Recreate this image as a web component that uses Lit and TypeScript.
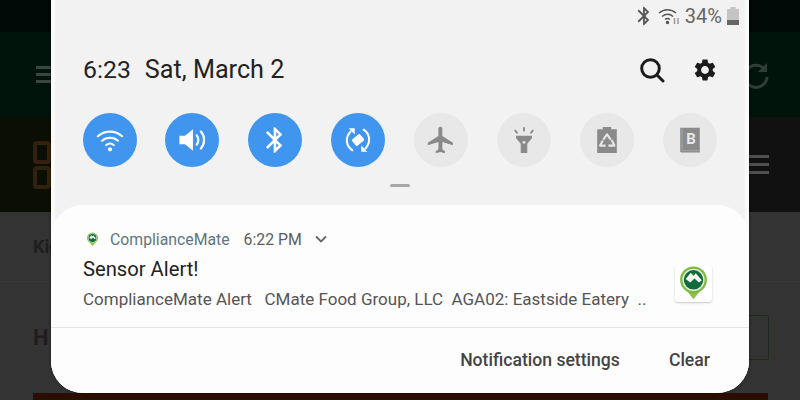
import { LitElement, css, html, svg } from "lit";
import { customElement } from "lit/decorators.js";

const BLUETOOTH =
  "M17.71 7.71L12 2h-1v7.59L6.41 5 5 6.41 10.59 12 5 17.59 6.41 19 11 14.41V22h1l5.71-5.71-4.3-4.29 4.3-4.29zM13 5.83l1.88 1.88L13 9.59V5.83zm1.88 10.46L13 18.17v-3.76l1.88 1.88z";
const FLIGHT =
  "M21 16v-2l-8-5V3.5c0-.83-.67-1.5-1.5-1.5S10 2.67 10 3.5V9l-8 5v2l8-2.5V19l-2 1.5V22l3.5-1 3.5 1v-1.5L13 19v-5.5l8 2.5z";
const GEAR =
  "M19.14 12.94c.04-.3.06-.61.06-.94 0-.32-.02-.64-.07-.94l2.03-1.58c.18-.14.23-.41.12-.61l-1.92-3.32c-.12-.22-.37-.29-.59-.22l-2.39.96c-.5-.38-1.03-.7-1.62-.94l-.36-2.54c-.04-.24-.24-.41-.48-.41h-3.84c-.24 0-.43.17-.47.41l-.36 2.54c-.59.24-1.13.57-1.62.94l-2.39-.96c-.22-.08-.47 0-.59.22L2.74 8.87c-.12.21-.08.47.12.61l2.03 1.58c-.05.3-.09.63-.09.94s.02.64.07.94l-2.03 1.58c-.18.14-.23.41-.12.61l1.92 3.32c.12.22.37.29.59.22l2.39-.96c.5.38 1.03.7 1.62.94l.36 2.54c.05.24.24.41.48.41h3.84c.24 0 .44-.17.47-.41l.36-2.54c.59-.24 1.13-.56 1.62-.94l2.39.96c.22.08.47 0 .59-.22l1.92-3.32c.12-.22.07-.47-.12-.61l-2.01-1.58zM12 15.6c-1.98 0-3.6-1.62-3.6-3.6s1.62-3.6 3.6-3.6 3.6 1.62 3.6 3.6-1.62 3.6-3.6 3.6z";

// quick settings glyphs, all drawn in a 30x30 box
const wifiGlyph = svg`
  <g fill="none" stroke="currentColor" stroke-width="2.200" stroke-linecap="round">
    <path d="M2 11c7.500-6.600 18.500-6.600 26 0" />
    <path d="M6.500 15.800c5-4.300 12-4.300 17 0" />
    <path d="M11 20.400c2.400-2 5.600-2 8 0" />
  </g>
  <circle cx="15" cy="25" r="2.200" fill="currentColor" />`;
const soundGlyph = svg`
  <path d="M1.500 10.500h6L16 3.500v23l-8.500-7h-6z" fill="currentColor" />
  <g fill="none" stroke="currentColor" stroke-width="2.300" stroke-linecap="round">
    <path d="M20 10c2.400 2.800 2.400 7.200 0 10" />
    <path d="M24.500 6c4.600 5 4.600 13 0 18" />
  </g>`;
const bluetoothGlyph = svg`
  <g transform="translate(-1.500 -1.500) scale(1.37)"><path d=${BLUETOOTH} fill="currentColor" /></g>`;
const rotateGlyph = svg`
  <g fill="none" stroke="currentColor" stroke-width="2.200" stroke-linecap="round">
    <path d="M9 26c-7-4.500-8-13.500-2-20" />
    <path d="M21 4c7 4.500 8 13.500 2 20" />
  </g>
  <path d="M5 2.500h6.500V9zM25 27.500h-6.500V21z" fill="currentColor" />
  <rect x="9.500" y="10.500" width="11" height="9" rx="1.500" fill="currentColor" transform="rotate(-40 15 15)" />`;
const flightGlyph = svg`
  <g transform="translate(-2 -2) scale(1.42)"><path d=${FLIGHT} fill="currentColor" /></g>`;
const torchGlyph = svg`
  <path d="M6.500 10.500h17v2.500L18.500 19v10h-7V19L6.500 13z" fill="currentColor" />
  <circle cx="15" cy="17.500" r="1.500" fill="#e8e8e8" />
  <rect x="14" y="1" width="2" height="5" rx="1" fill="currentColor" />
  <rect x="5.500" y="3.500" width="2" height="5" rx="1" fill="currentColor" transform="rotate(-40 6.500 6)" />
  <rect x="22.500" y="3.500" width="2" height="5" rx="1" fill="currentColor" transform="rotate(40 23.500 6)" />`;
const batterySaverGlyph = svg`
  <path d="M10.500 1h9v2.500h6V29h-21V3.500h6z" fill="currentColor" />
  <g fill="none" stroke="#e8e8e8" stroke-width="2.200" stroke-linejoin="round">
    <path d="M11 14.500l4-5.500 4 5.500" />
    <path d="M20 15l3 6h-6.500" />
    <path d="M13.500 21H7.500l3-5.500" />
  </g>`;
const bixbyGlyph = svg`
  <path d="M4.500 2h21v26.500H5.500l-1-1z" fill="currentColor" />
  <path d="M6.500 2v24.500h19" fill="none" stroke="#a6a6a6" stroke-width="1" />
  <text x="16" y="19.500" class="book-letter">B</text>`;

const TOGGLES = [
  { glyph: wifiGlyph, on: true },
  { glyph: soundGlyph, on: true },
  { glyph: bluetoothGlyph, on: true },
  { glyph: rotateGlyph, on: true },
  { glyph: flightGlyph, on: false },
  { glyph: torchGlyph, on: false },
  { glyph: batterySaverGlyph, on: false },
  { glyph: bixbyGlyph, on: false },
];

// map pin of the app, shared by the small status icon and the thumbnail
const pin = svg`
  <path d="M20 37l-8-10h16z" fill="#8cc04b" />
  <circle cx="20" cy="16" r="14.500" fill="#7cba43" />
  <circle cx="20" cy="16" r="12" fill="#e6f2dc" />
  <circle cx="20" cy="16" r="10.500" fill="#0f6b3c" />
  <path d="M11.500 15l5.500-6.500 3 3 2.500-2.500 6.500 7.500-3 2.500-5-4.500-4.500 4.500z" fill="#f2f6ee" />`;

@customElement("app-root")
export class AppRoot extends LitElement {
  static styles = css`
    :host {
      display: block;
      position: relative;
      width: 800px;
      height: 400px;
      overflow: hidden;
      font-family: Roboto, "Liberation Sans", sans-serif;
      background: #333333;
    }

    /* the dimmed page behind the shade */
    .page-status {
      height: 32px;
      background: #010906;
    }

    .page-toolbar {
      height: 85px;
      background: #01140c;
      display: flex;
      justify-content: space-between;
      align-items: center;
      padding: 0 30px 0 36px;
    }

    .burger {
      display: flex;
      flex-direction: column;
      gap: 4px;
    }

    .burger span {
      display: block;
      width: 20px;
      height: 3px;
      background: #3a4640;
    }

    .burger.wide {
      gap: 5px;
    }

    .burger.wide span {
      background: #505050;
    }

    .refresh {
      width: 28px;
      height: 28px;
      color: #2f3f38;
    }

    .page-header {
      height: 95px;
      display: flex;
      justify-content: space-between;
      align-items: center;
      padding: 0 31px 0 33px;
      background: linear-gradient(90deg, #0b0e02 0 50%, #121111 50%);
    }

    .logo {
      display: flex;
      flex-direction: column;
      gap: 2px;
    }

    .logo span {
      display: block;
      width: 18px;
      height: 23px;
      box-sizing: border-box;
      border: 4px solid #33200f;
      border-radius: 4px;
    }

    .page-tab {
      height: 70px;
      box-sizing: border-box;
      padding: 24px 33px 0;
      font-size: 18px;
      font-weight: 700;
      color: #1e1e1e;
      border-bottom: 1px solid #383838;
    }

    .page-heading {
      height: 111px;
      box-sizing: border-box;
      padding: 33px 31px 0 33px;
      display: flex;
      justify-content: space-between;
      font-size: 22px;
      font-weight: 700;
      color: #1e1e1e;
    }

    .page-heading span {
      margin-top: 10px;
    }

    .outline-btn {
      width: 70px;
      height: 45px;
      box-sizing: border-box;
      border: 1px solid #1f2a1f;
      border-radius: 2px;
    }

    .page-strip {
      position: absolute;
      left: 33px;
      right: 32px;
      bottom: 0;
      height: 7px;
      background: #2b0e02;
    }

    /* notification shade */
    .shade {
      position: absolute;
      left: 51px;
      top: 0;
      width: 698px;
      height: 393px;
      display: flex;
      flex-direction: column;
      background: #f2f2f2;
      border-radius: 0 0 32px 32px;
      box-shadow:
        inset 4px 0 0 #fafafa,
        inset -4px 0 0 #fafafa,
        0 0 3px rgb(0 0 0 / 50%);
    }

    .status {
      height: 32px;
      display: flex;
      justify-content: flex-end;
      align-items: center;
      padding-right: 10px;
      color: #666666;
      font-size: 20px;
    }

    .status svg {
      display: block;
      color: #555555;
    }

    .status-bt {
      width: 22px;
      height: 22px;
      margin-right: 3px;
    }

    .status-wifi {
      width: 22px;
      height: 18px;
      margin-right: 5px;
    }

    .status-battery {
      width: 12px;
      height: 18px;
      margin-left: 5px;
    }

    .clock-row {
      margin-top: 18px;
      height: 40px;
      padding: 0 31px 0 32px;
      display: flex;
      align-items: center;
      color: #222222;
      font-size: 24.800px;
    }

    .clock-row span {
      margin-bottom: 2px;
    }

    .clock-row .date {
      margin-left: 14px;
      flex: 1;
      font-size: 25.200px;
    }

    .tool {
      display: block;
      width: 26px;
      height: 26px;
      color: #1c1c1c;
    }

    .tool.gear {
      margin-left: 27px;
    }

    .toggles {
      margin-top: 23px;
      padding-left: 32px;
      display: flex;
      gap: 29px;
    }

    .toggle {
      width: 54px;
      height: 54px;
      border-radius: 50%;
      display: flex;
      align-items: center;
      justify-content: center;
      background: #e8e8e8;
      color: #8a8a8a;
    }

    .toggle:first-child {
      margin-right: -1px;
    }

    .toggle.on {
      background: #4096ee;
      color: #ffffff;
    }

    .toggle svg {
      display: block;
      width: 28px;
      height: 28px;
    }

    .book-letter {
      font-family: Roboto, sans-serif;
      font-size: 16px;
      font-weight: 700;
      fill: #e8e8e8;
      text-anchor: middle;
    }

    .handle {
      margin: 17px auto 18px;
      width: 20px;
      height: 3px;
      border-radius: 2px;
      background: #a8a8a8;
    }

    .card {
      flex: 1;
      display: flex;
      flex-direction: column;
      background: #fdfdfd;
      border-radius: 32px;
    }

    .card-main {
      height: 123px;
      display: flex;
      justify-content: space-between;
      padding: 22px 37px 0 32px;
      box-sizing: border-box;
      border-bottom: 1px solid #e4e4e4;
    }

    .app-row {
      height: 24px;
      display: flex;
      align-items: center;
      font-size: 15.800px;
      color: #5c5f62;
    }

    .app-icon {
      display: block;
      width: 15px;
      height: 15px;
      margin: 0 10.500px 0 1.500px;
    }

    .app-name {
      color: #5e7582;
      margin-right: 14px;
    }

    .chevron {
      display: block;
      width: 12px;
      height: 8px;
      margin-left: 13px;
      color: #666666;
    }

    .title {
      margin-top: 6px;
      height: 24px;
      line-height: 25px;
      font-size: 20.200px;
      color: #222222;
    }

    .body {
      margin-top: 7px;
      height: 24px;
      line-height: 22px;
      font-size: 17px;
      color: #555555;
      white-space: pre;
    }

    .thumb {
      margin-top: 38px;
      width: 37px;
      height: 37px;
      background: #ffffff;
      border-radius: 3px;
      box-shadow: 0 1px 2px rgb(0 0 0 / 22%);
      display: flex;
      align-items: center;
      justify-content: center;
    }

    .thumb svg {
      display: block;
      width: 37px;
      height: 37px;
    }

    .actions {
      flex: 1;
      display: flex;
      justify-content: flex-end;
      align-items: center;
      gap: 49px;
      padding: 0 39px 2px 0;
      font-size: 17.600px;
      font-weight: 500;
      color: #444444;
    }
  `;

  render() {
    return html`
      <div class="page-status"></div>
      <div class="page-toolbar">
        <div class="burger"><span></span><span></span><span></span></div>
        <svg class="refresh" viewBox="0 0 28 28" fill="none" stroke="currentColor" stroke-width="3">
          <path d="M23 9a11 11 0 1 0 2 7" />
          <path d="M25 2v9h-9z" fill="currentColor" stroke="none" />
        </svg>
      </div>
      <div class="page-header">
        <div class="logo"><span></span><span></span></div>
        <div class="burger wide"><span></span><span></span><span></span></div>
      </div>
      <div class="page-tab">Kic</div>
      <div class="page-heading"><span>H</span><div class="outline-btn"></div></div>
      <div class="page-strip"></div>

      <section class="shade">
        <div class="status">
          <svg class="status-bt" viewBox="0 0 24 24" fill="currentColor"><path d=${BLUETOOTH} /></svg>
          <svg class="status-wifi" viewBox="0 0 22 18" fill="none" stroke="currentColor" stroke-width="1.500">
            <path d="M1 6c5-4.500 12-4.500 17 0" />
            <path d="M4 9.500c3.500-3 8-3 11 0" />
            <path d="M7 12.500c1.500-1.300 3.500-1.300 5 0" />
            <circle cx="9.500" cy="15.500" r="1" fill="currentColor" />
            <path d="M16.500 11v6M20 11v6" stroke="#9a9a9a" />
          </svg>
          <span>34%</span>
          <svg class="status-battery" viewBox="0 0 12 18">
            <path d="M3.500 0h5v2H12v16H0V2h3.500z" fill="#c4c4c4" />
            <rect y="13" width="12" height="5" fill="#666666" />
          </svg>
        </div>

        <div class="clock-row">
          <span>6:23</span>
          <span class="date">Sat, March 2</span>
          <svg class="tool" viewBox="0 0 26 26" fill="none" stroke="currentColor" stroke-width="3" stroke-linecap="round">
            <circle cx="11.500" cy="11.500" r="8.800" />
            <path d="M18 18l6 6" />
          </svg>
          <svg class="tool gear" viewBox="0 0 24 24" fill="currentColor"><path d=${GEAR} /></svg>
        </div>

        <div class="toggles">
          ${TOGGLES.map(
            (t) => html`<div class="toggle ${t.on ? "on" : ""}">
              <svg viewBox="0 0 30 30">${t.glyph}</svg>
            </div>`,
          )}
        </div>

        <div class="handle"></div>

        <article class="card">
          <div class="card-main">
            <div>
              <div class="app-row">
                <svg class="app-icon" viewBox="0 0 40 40">${pin}</svg>
                <span class="app-name">ComplianceMate</span>
                <span>6:22 PM</span>
                <svg class="chevron" viewBox="0 0 12 8" fill="none" stroke="currentColor" stroke-width="1.800">
                  <path d="M1 1.500l5 5 5-5" />
                </svg>
              </div>
              <div class="title">Sensor Alert!</div>
              <div class="body">ComplianceMate Alert   CMate Food Group, LLC  AGA02: Eastside Eatery  ..</div>
            </div>
            <div class="thumb"><svg viewBox="0 0 40 40">${pin}</svg></div>
          </div>
          <div class="actions">
            <span>Notification settings</span>
            <span>Clear</span>
          </div>
        </article>
      </section>
    `;
  }
}
